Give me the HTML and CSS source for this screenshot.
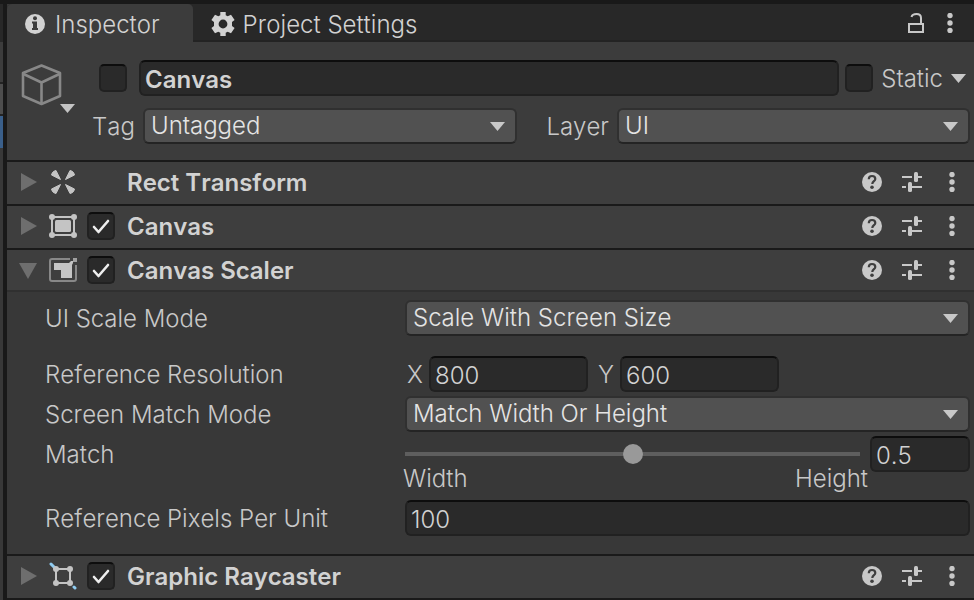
FILE: index.html
```html
<!DOCTYPE html>
<html lang="en">
<head>
<meta charset="utf-8">
<meta name="viewport" content="width=device-width, initial-scale=1">
<title>Inspector</title>
<link rel="stylesheet" href="styles.css">
</head>
<body>
<svg class="defs" aria-hidden="true">
  <symbol id="arrow-down" viewBox="0 0 15 9"><path d="M0 0h15L7.500 9z" fill="currentColor"/></symbol>
  <symbol id="fold-right" viewBox="0 0 18 18"><path d="M2 0l16 9-16 9z" fill="currentColor"/></symbol>
  <symbol id="fold-down" viewBox="0 0 18 18"><path d="M0 2h18L9 18z" fill="currentColor"/></symbol>
  <symbol id="check" viewBox="0 0 28 28"><path d="M7 15l4.500 5L21 9" fill="none" stroke="currentColor" stroke-width="2.600" stroke-linecap="round" stroke-linejoin="round"/></symbol>
  <symbol id="dots" viewBox="0 0 6 20"><g fill="currentColor"><circle cx="3" cy="2.500" r="2.700"/><circle cx="3" cy="10" r="2.700"/><circle cx="3" cy="17.500" r="2.700"/></g></symbol>
  <symbol id="help" viewBox="0 0 20 20"><circle cx="10" cy="10" r="10" fill="currentColor"/><path d="M6.800 7.200C6.800 5 8.200 4 10 4s3.300 1.100 3.300 2.900c0 2.200-3 2.400-3 5.100" fill="none" stroke="#3e3e3e" stroke-width="2.200"/><circle cx="10" cy="15.300" r="1.800" fill="#3e3e3e"/></symbol>
  <symbol id="preset" viewBox="0 0 20 20"><g fill="currentColor"><path d="M0 4h10v2H0zM16 4h4v2h-4zM0 14h4v2H0zM10 14h10v2H10z"/><rect x="12" y="0" width="4" height="10" rx="1.500"/><rect x="6" y="10" width="4" height="10" rx="1.500"/></g></symbol>
</svg>
<div class="editor">
  <aside class="neighbor" aria-hidden="true">
    <div class="neighbor-tab"></div><div class="neighbor-bar"></div><div class="neighbor-row"></div><div class="neighbor-selected"></div>
  </aside>
  <main class="panel">
    <nav class="tabs">
      <button class="tab active" type="button">
        <svg class="icon-info" viewBox="0 0 20 20"><circle cx="10" cy="10" r="10" fill="currentColor"/><circle cx="10" cy="4.300" r="2" fill="#3c3c3c"/><path d="M7 7.500h5V14h1v2H7v-2h1V9.500H7z" fill="#3c3c3c"/></svg>
        <span>Inspector</span>
      </button>
      <button class="tab" type="button">
        <svg class="icon-gear" viewBox="0 0 24 24"><path fill="currentColor" fill-rule="evenodd" d="M9.300 0h5.400v3.200l2 1.100 3.300-1.600 3.600 5.300-2.600 2v4l2.600 2-3.600 5.300-3.300-1.600-2 1.100V24H9.300v-3.200l-2-1.100L4 21.300.400 16l2.600-2v-4L.400 8 4 2.700l3.300 1.600 2-1.100zM12 7.600a4.400 4.400 0 1 0 0 8.800 4.400 4.400 0 0 0 0-8.800z"/></svg>
        <span>Project Settings</span>
      </button>
      <div class="tab-tools">
        <button class="tool" type="button" aria-label="Lock"><svg class="icon-lock" viewBox="0 0 16 20" fill="none" stroke="currentColor" stroke-width="2"><rect x="1" y="11" width="14" height="8"/><path d="M3.500 4C4 2 6 1 8.500 1 11.500 1 13 2.500 13 5v6"/></svg></button>
        <button class="tool" type="button" aria-label="Tab menu"><svg class="icon-dots"><use href="#dots"/></svg></button>
      </div>
    </nav>

    <header class="object">
      <button class="object-icon" type="button" aria-label="Choose icon">
        <svg class="icon-cube" viewBox="0 0 42 42" fill="none" stroke="#888" stroke-width="2.600" stroke-linejoin="round"><path d="M20.500 1.500L39 9v23l-18.500 8L2 32V9z"/><path d="M2.500 10l18 8.500 18-8.500M20.500 18.500V40"/></svg>
        <svg class="arrow"><use href="#arrow-down"/></svg>
      </button>
      <div class="object-lines">
        <div class="name-line">
          <span class="tick"><input type="checkbox" aria-label="Active"></span>
          <input class="field name" type="text" value="Canvas" aria-label="Name">
          <span class="tick"><input type="checkbox" id="static"></span>
          <label for="static">Static</label>
          <svg class="arrow"><use href="#arrow-down"/></svg>
        </div>
        <div class="tag-line">
          <label for="tag">Tag</label>
          <span class="drop"><select id="tag"><option>Untagged</option></select><svg class="arrow"><use href="#arrow-down"/></svg></span>
          <label class="layer-label" for="layer">Layer</label>
          <span class="drop"><select id="layer"><option>UI</option></select><svg class="arrow"><use href="#arrow-down"/></svg></span>
        </div>
      </div>
    </header>

    <section class="component">
      <div class="bar">
        <button class="fold" type="button" aria-label="Expand"><svg><use href="#fold-right"/></svg></button>
        <svg class="kind" viewBox="0 0 28 28" fill="#c4c4c4" stroke="#c4c4c4" stroke-linejoin="round"><path d="M11.500 11.500L2.500 7C3 4.500 4.500 3 7 2.500zM16.500 11.500L25.500 7C25 4.500 23.500 3 21 2.500zM11.500 16.500L2.500 21c.500 2.500 2 4 4.500 4.500zM16.500 16.500l9 4.500c-.500 2.500-2 4-4.500 4.500z"/></svg>
        <span class="tick-space"></span>
        <h2>Rect Transform</h2>
        <button class="tool" type="button" aria-label="Help"><svg><use href="#help"/></svg></button>
        <button class="tool" type="button" aria-label="Presets"><svg><use href="#preset"/></svg></button>
        <button class="tool" type="button" aria-label="Menu"><svg class="icon-dots"><use href="#dots"/></svg></button>
      </div>
    </section>

    <section class="component">
      <div class="bar">
        <button class="fold" type="button" aria-label="Expand"><svg><use href="#fold-right"/></svg></button>
        <svg class="kind" viewBox="0 0 28 28" fill="#c4c4c4"><path d="M3 5h22v18H3z" fill="none" stroke="#c4c4c4" stroke-width="2"/><rect x="6" y="8" width="16" height="12" rx="1.500"/><circle cx="3" cy="5" r="3"/><circle cx="25" cy="5" r="3"/><circle cx="3" cy="23" r="3"/><circle cx="25" cy="23" r="3"/></svg>
        <span class="tick"><input type="checkbox" checked aria-label="Canvas enabled"><svg><use href="#check"/></svg></span>
        <h2>Canvas</h2>
        <button class="tool" type="button" aria-label="Help"><svg><use href="#help"/></svg></button>
        <button class="tool" type="button" aria-label="Presets"><svg><use href="#preset"/></svg></button>
        <button class="tool" type="button" aria-label="Menu"><svg class="icon-dots"><use href="#dots"/></svg></button>
      </div>
    </section>

    <section class="component open">
      <div class="bar">
        <button class="fold" type="button" aria-label="Collapse"><svg><use href="#fold-down"/></svg></button>
        <svg class="kind" viewBox="0 0 28 28"><path d="M21 3H3Q1 3 1 5v18q0 2 2 2h22q2 0 2-2V9" fill="none" stroke="#888" stroke-width="2"/><path d="M5 7h15l2-2h2v2l-1 2v13H12v-8H5z" fill="#c4c4c4"/><path d="M24 2h4v4h-4z" fill="#a0a0a0"/></svg>
        <span class="tick"><input type="checkbox" checked aria-label="Canvas Scaler enabled"><svg><use href="#check"/></svg></span>
        <h2>Canvas Scaler</h2>
        <button class="tool" type="button" aria-label="Help"><svg><use href="#help"/></svg></button>
        <button class="tool" type="button" aria-label="Presets"><svg><use href="#preset"/></svg></button>
        <button class="tool" type="button" aria-label="Menu"><svg class="icon-dots"><use href="#dots"/></svg></button>
      </div>
      <div class="props">
        <div class="prop spaced">
          <label for="mode">UI Scale Mode</label>
          <span class="drop"><select id="mode"><option>Scale With Screen Size</option></select><svg class="arrow"><use href="#arrow-down"/></svg></span>
        </div>
        <div class="prop">
          <span class="caption">Reference Resolution</span>
          <div class="vector">
            <label for="res-x">X</label><input class="field" id="res-x" type="text" value="800">
            <label for="res-y">Y</label><input class="field" id="res-y" type="text" value="600">
          </div>
        </div>
        <div class="prop">
          <label for="match-mode">Screen Match Mode</label>
          <span class="drop"><select id="match-mode"><option>Match Width Or Height</option></select><svg class="arrow"><use href="#arrow-down"/></svg></span>
        </div>
        <div class="prop tall">
          <label for="match">Match</label>
          <div class="slider">
            <div class="track">
              <input id="match" type="range" min="0" max="1" step="0.01" value="0.5">
              <div class="range-ends"><span>Width</span><span>Height</span></div>
            </div>
            <input class="field" type="text" value="0.5" aria-label="Match value">
          </div>
        </div>
        <div class="prop">
          <label for="ppu">Reference Pixels Per Unit</label>
          <input class="field" id="ppu" type="text" value="100">
        </div>
      </div>
    </section>

    <section class="component">
      <div class="bar">
        <button class="fold" type="button" aria-label="Expand"><svg><use href="#fold-right"/></svg></button>
        <svg class="kind" viewBox="0 0 28 28" fill="#c4c4c4"><path d="M2 2l5 5M25 25l1 1" stroke="#8fcbf0" stroke-width="3" stroke-linecap="round"/><path d="M7 7h14v14H7z" fill="none" stroke="#c4c4c4" stroke-width="2"/><circle cx="7" cy="7" r="3"/><circle cx="21" cy="7" r="3"/><circle cx="7" cy="21" r="3"/><circle cx="21" cy="21" r="3"/></svg>
        <span class="tick"><input type="checkbox" checked aria-label="Graphic Raycaster enabled"><svg><use href="#check"/></svg></span>
        <h2>Graphic Raycaster</h2>
        <button class="tool" type="button" aria-label="Help"><svg><use href="#help"/></svg></button>
        <button class="tool" type="button" aria-label="Presets"><svg><use href="#preset"/></svg></button>
        <button class="tool" type="button" aria-label="Menu"><svg class="icon-dots"><use href="#dots"/></svg></button>
      </div>
    </section>
  </main>
</div>
</body>
</html>
```
FILE: styles.css
```css
* { box-sizing: border-box; }

body {
  margin: 0;
  background: #191919;
  color: #c8c8c8;
  font: 350 24px/28px Inter, sans-serif;
  font-optical-sizing: none;
  font-kerning: none;
}

button, input, select { font: inherit; font-kerning: inherit; font-optical-sizing: inherit; color: inherit; margin: 0; }
button { padding: 0; border: 0; background: none; }
svg { display: block; flex: none; }
label, .caption, .tab span { padding-top: 2px; }
.defs { position: absolute; width: 0; height: 0; }

.editor { display: flex; gap: 4px; padding-top: 4px; min-height: 100vh; }

/* Edge of the window docked to the left */
.neighbor { display: flex; flex-direction: column; width: 3px; background: #383838; }
.neighbor-tab { height: 38px; background: #282828; }
.neighbor-bar { height: 40px; background: #3c3c3c; }
.neighbor-row { height: 34px; background: #4d4d4d; border: solid #232323; border-width: 2px 0; }
.neighbor-selected { height: 32px; background: #3a5f8a; }

.panel { flex: 1; min-width: 0; background: #383838; }

/* Tabs */
.tabs { display: flex; height: 38px; background: #282828; border-radius: 5px 0 0 0; box-shadow: inset 0 -2px #232323; }
.tab { display: flex; align-items: center; gap: 8px; padding: 2px 18px 0; color: #d2d2d2; }
.tab.active { gap: 10px; padding-right: 33px; background: #3c3c3c; border-radius: 5px 5px 0 0; }
.icon-info { width: 20px; height: 20px; }
.icon-gear { width: 24px; height: 24px; }
.tab-tools { display: flex; align-items: center; gap: 23px; margin-left: auto; padding-right: 21px; }
.tool svg { width: 20px; height: 20px; }
.tool svg.icon-lock { width: 16px; }
.tool svg.icon-dots { width: 6px; }

/* Fields */
.field {
  width: 100%;
  min-width: 0;
  height: 36px;
  padding: 2px 4px 0;
  border: 2px solid #212121;
  border-top-color: #0d0d0d;
  border-radius: 6px;
  background: #2a2a2a;
  color: #d2d2d2;
}
.drop { position: relative; display: block; min-width: 0; }
.drop select {
  display: block;
  appearance: none;
  width: 100%;
  height: 36px;
  padding: 0 32px 0 6px;
  border: 2px solid #303030;
  border-bottom-color: #242424;
  border-radius: 6px;
  background: #515151;
  color: #e4e4e4;
}
.arrow { width: 15px; height: 9px; }
.drop .arrow { position: absolute; right: 12px; top: 14px; pointer-events: none; }
.tick, .tick-space { flex: none; width: 28px; height: 28px; }
.tick { display: grid; color: #eee; }
.tick > * { grid-area: 1 / 1; width: 28px; height: 28px; }
.tick input {
  appearance: none;
  border: 2px solid #212121;
  border-top-color: #0d0d0d;
  border-radius: 5px;
  background: #2a2a2a;
}
.tick svg { pointer-events: none; }

/* Object header */
.object { display: flex; gap: 17px; padding: 18px 4px 16px 14px; background: #3c3c3c; }
.object-icon { position: relative; align-self: flex-start; width: 54px; padding-top: 4px; color: #c4c4c4; }
.icon-cube { width: 42px; height: 42px; }
.object-icon .arrow { position: absolute; right: 0; bottom: -7px; }
.object-lines { flex: 1; min-width: 0; display: grid; gap: 12px; }
.name-line { display: flex; align-items: center; padding-left: 7px; }
.name-line .name { flex: 1; margin: 0 6px 0 12px; font-weight: 600; }
.name-line label { margin: 0 8px; }
.name-line .arrow { margin-right: 4px; }
.tag-line { display: grid; grid-template-columns: 43px 374fr 84px 353fr; gap: 8px; align-items: center; }
.layer-label { justify-self: end; }

/* Components */
.component { border-top: 2px solid #1a1a1a; }
.component:last-child { border-bottom: 2px solid #1a1a1a; }
.bar { display: flex; align-items: center; height: 42px; padding: 0 19px 0 12px; background: #3e3e3e; border-bottom: 2px solid #3e3e3e; }
.open .bar { border-bottom-color: #303030; }
.fold { margin-right: 12px; color: #6e6e6e; }
.fold svg { width: 18px; height: 18px; }
.kind { width: 28px; height: 28px; margin-right: 10px; }
.bar h2 { flex: 1; margin: 0 0 0 12px; padding-top: 2px; font-size: 24px; line-height: 28px; font-weight: 600; color: #d2d2d2; }
.bar .tool { margin-left: 20px; }
.bar .tool:last-child { margin-left: 27px; }

/* Properties */
.props { display: grid; gap: 4px; padding: 8px 4px 18px 38px; }
.prop { display: grid; grid-template-columns: 360px minmax(0, 1fr); align-items: center; min-height: 36px; }
.spaced { margin-bottom: 16px; }
.tall { align-items: start; min-height: 60px; }
.tall > label { line-height: 34px; }
.vector { display: flex; align-items: center; }
.vector label { width: 22px; margin-left: 2px; }
.vector label + .field { flex: 0 1 159px; }
.vector .field + label { margin-left: 10px; }
.slider { display: grid; grid-template-columns: minmax(0, 1fr) 100px; gap: 10px; align-items: start; }
.track { padding-top: 8px; }
.slider input[type="range"] { display: block; appearance: none; width: 100%; height: 20px; background: linear-gradient(#5e5e5e, #5e5e5e) center / 100% 4px no-repeat; }
.slider input[type="range"]::-webkit-slider-thumb { appearance: none; width: 20px; height: 20px; border-radius: 50%; background: #999; }
.range-ends { display: flex; justify-content: space-between; margin: 0 -8px 0 -2px; line-height: 30px; }
```
